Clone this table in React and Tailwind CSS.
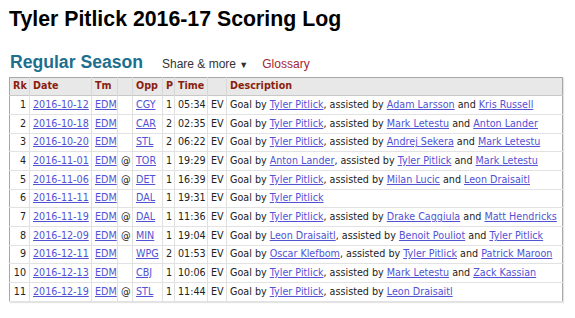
const rows = [
  { rk: 1, date: "2016-10-12", at: "", opp: "CGY", p: 1, time: "05:34", scorer: "Tyler Pitlick", assists: ["Adam Larsson", "Kris Russell"] },
  { rk: 2, date: "2016-10-18", at: "", opp: "CAR", p: 2, time: "02:35", scorer: "Tyler Pitlick", assists: ["Mark Letestu", "Anton Lander"] },
  { rk: 3, date: "2016-10-20", at: "", opp: "STL", p: 2, time: "06:22", scorer: "Tyler Pitlick", assists: ["Andrej Sekera", "Mark Letestu"] },
  { rk: 4, date: "2016-11-01", at: "@", opp: "TOR", p: 1, time: "19:29", scorer: "Anton Lander", assists: ["Tyler Pitlick", "Mark Letestu"] },
  { rk: 5, date: "2016-11-06", at: "@", opp: "DET", p: 1, time: "16:39", scorer: "Tyler Pitlick", assists: ["Milan Lucic", "Leon Draisaitl"] },
  { rk: 6, date: "2016-11-11", at: "", opp: "DAL", p: 1, time: "19:31", scorer: "Tyler Pitlick", assists: [] },
  { rk: 7, date: "2016-11-19", at: "@", opp: "DAL", p: 1, time: "11:36", scorer: "Tyler Pitlick", assists: ["Drake Caggiula", "Matt Hendricks"] },
  { rk: 8, date: "2016-12-09", at: "@", opp: "MIN", p: 1, time: "19:04", scorer: "Leon Draisaitl", assists: ["Benoit Pouliot", "Tyler Pitlick"] },
  { rk: 9, date: "2016-12-11", at: "", opp: "WPG", p: 2, time: "01:53", scorer: "Oscar Klefbom", assists: ["Tyler Pitlick", "Patrick Maroon"] },
  { rk: 10, date: "2016-12-13", at: "", opp: "CBJ", p: 1, time: "10:06", scorer: "Tyler Pitlick", assists: ["Mark Letestu", "Zack Kassian"] },
  { rk: 11, date: "2016-12-19", at: "@", opp: "STL", p: 1, time: "11:44", scorer: "Tyler Pitlick", assists: ["Leon Draisaitl"] },
];

const linkClass = "text-[#5252d4] underline";

function Link({ children }) {
  return <a href="#" className={linkClass}>{children}</a>;
}

function Description({ row }) {
  return (
    <>
      Goal by <Link>{row.scorer}</Link>
      {row.assists.length > 0 && ", assisted by "}
      {row.assists[0] && <Link>{row.assists[0]}</Link>}
      {row.assists[1] && (
        <>
          {" "}and <Link>{row.assists[1]}</Link>
        </>
      )}
    </>
  );
}

export default function App() {
  const th = "border-l border-[#d8d8d8] px-[3px] text-left font-bold text-[#8b1e0e]";
  const td = "border-l border-[#e0e0e0] px-[3px] whitespace-nowrap";

  return (
    <div className="h-[318px] w-[575px] bg-white pl-[9px] pt-[6px] text-[#222]">
      <h1 className="font-['Liberation_Sans',Arial,sans-serif] text-[21.3px] font-bold leading-[26px] text-black">
        Tyler Pitlick 2016-17 Scoring Log
      </h1>

      <div className="mt-[19px] flex items-baseline font-['Liberation_Sans',Arial,sans-serif]">
        <h2 className="ml-[1px] text-[17.6px] font-bold leading-[22px] text-[#1d6f8f]">Regular Season</h2>
        <span className="ml-[19px] text-[12px] text-[#333]">
          Share &amp; more <span className="text-[9px]">▼</span>
        </span>
        <span className="ml-[14px] text-[12px] text-[#a3262f]">Glossary</span>
      </div>

      <table className="mt-[4px] w-[554px] table-fixed border-collapse border border-[#a8a8a8] font-['DejaVu_Sans',Verdana,sans-serif] text-[9.6px] shadow-[1px_1px_1px_#e4e4e4]">
        <colgroup>
          <col className="w-[20px]" />
          <col className="w-[62px]" />
          <col className="w-[26px]" />
          <col className="w-[15px]" />
          <col className="w-[30px]" />
          <col className="w-[12px]" />
          <col className="w-[33px]" />
          <col className="w-[19px]" />
          <col />
        </colgroup>
        <thead>
          <tr className="h-[18px] border-b border-[#c8c8c8] bg-[#e8e8e8]">
            <th className={th + " border-l-0"}>Rk</th>
            <th className={th}>Date</th>
            <th className={th}>Tm</th>
            <th className={th}></th>
            <th className={th}>Opp</th>
            <th className={th}>P</th>
            <th className={th}>Time</th>
            <th className={th}></th>
            <th className={th}>Description</th>
          </tr>
        </thead>
        <tbody>
          {rows.map((row) => (
            <tr key={row.rk} className={(row.rk % 3 === 0 ? "h-[18px]" : "h-[19px]") + " border-b border-[#e2e2e2]"}>
              <td className={td + " border-l-0 text-right"}>{row.rk}</td>
              <td className={td}><Link>{row.date}</Link></td>
              <td className={td}><Link>EDM</Link></td>
              <td className={td}>{row.at}</td>
              <td className={td}><Link>{row.opp}</Link></td>
              <td className={td}>{row.p}</td>
              <td className={td}>{row.time}</td>
              <td className={td}>EV</td>
              <td className={td}><Description row={row} /></td>
            </tr>
          ))}
        </tbody>
      </table>
    </div>
  );
}
